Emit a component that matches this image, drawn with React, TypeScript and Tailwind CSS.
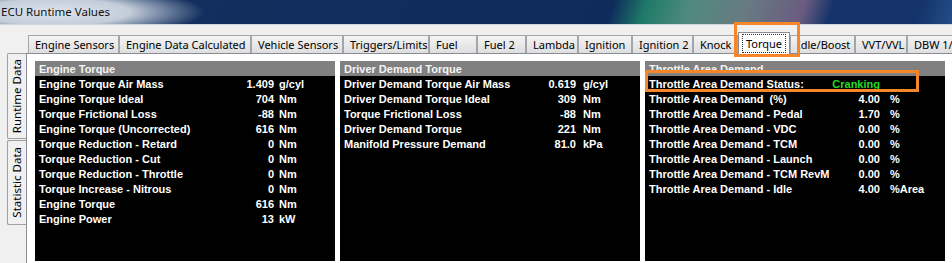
import React from "react";

type Tab = { label: string; cls: string; selected?: boolean };

const tabs: Tab[] = [
  { label: "Engine Sensors", cls: "w-[91px]" },
  { label: "Engine Data Calculated", cls: "w-[132px]" },
  { label: "Vehicle Sensors", cls: "w-[92px]" },
  { label: "Triggers/Limits", cls: "w-[86px]" },
  { label: "Fuel", cls: "w-[48px]" },
  { label: "Fuel 2", cls: "w-[49px]" },
  { label: "Lambda", cls: "w-[52px]" },
  { label: "Ignition", cls: "w-[54px]" },
  { label: "Ignition 2", cls: "w-[61px]" },
  { label: "Knock", cls: "w-[45px]" },
  { label: "Torque", cls: "w-[52px]", selected: true },
  { label: "Idle/Boost", cls: "w-[65px]" },
  { label: "VVT/VVL", cls: "w-[52px]" },
  { label: "DBW 1/2", cls: "w-[60px]" },
];

type Row = { label: string; value: string; unit: string; green?: boolean };

type Panel = {
  title: string;
  valCls: string;
  unitCls: string;
  rows: Row[];
};

const panels: Panel[] = [
  {
    title: "Engine Torque",
    valCls: "w-[235px]",
    unitCls: "ml-[5px]",
    rows: [
      { label: "Engine Torque Air Mass", value: "1.409", unit: "g/cyl" },
      { label: "Engine Torque Ideal", value: "704", unit: "Nm" },
      { label: "Torque Frictional Loss", value: "-88", unit: "Nm" },
      { label: "Engine Torque (Uncorrected)", value: "616", unit: "Nm" },
      { label: "Torque Reduction - Retard", value: "0", unit: "Nm" },
      { label: "Torque Reduction - Cut", value: "0", unit: "Nm" },
      { label: "Torque Reduction - Throttle", value: "0", unit: "Nm" },
      { label: "Torque Increase - Nitrous", value: "0", unit: "Nm" },
      { label: "Engine Torque", value: "616", unit: "Nm" },
      { label: "Engine Power", value: "13", unit: "kW" },
    ],
  },
  {
    title: "Driver Demand Torque",
    valCls: "w-[232px]",
    unitCls: "ml-[7px]",
    rows: [
      { label: "Driver Demand Torque Air Mass", value: "0.619", unit: "g/cyl" },
      { label: "Driver Demand Torque Ideal", value: "309", unit: "Nm" },
      { label: "Torque Frictional Loss", value: "-88", unit: "Nm" },
      { label: "Driver Demand Torque", value: "221", unit: "Nm" },
      { label: "Manifold Pressure Demand", value: "81.0", unit: "kPa" },
    ],
  },
  {
    title: "Throttle Area Demand",
    valCls: "w-[231px]",
    unitCls: "ml-[10px]",
    rows: [
      { label: "Throttle Area Demand Status:", value: "Cranking", unit: "", green: true },
      { label: "Throttle Area Demand  (%)", value: "4.00", unit: "%" },
      { label: "Throttle Area Demand - Pedal", value: "1.70", unit: "%" },
      { label: "Throttle Area Demand - VDC", value: "0.00", unit: "%" },
      { label: "Throttle Area Demand - TCM", value: "0.00", unit: "%" },
      { label: "Throttle Area Demand - Launch", value: "0.00", unit: "%" },
      { label: "Throttle Area Demand - TCM RevM", value: "0.00", unit: "%" },
      { label: "Throttle Area Demand - Idle", value: "4.00", unit: "%Area" },
    ],
  },
];

function DataPanel({ p }: { p: Panel }) {
  return (
    <div className="w-[300px] h-[200px] bg-black flex flex-col font-['Liberation_Sans',Arial,sans-serif] font-bold text-[11px] leading-none text-white">
      <div className="h-[15px] bg-[#808080] flex items-center pl-[4px] pt-[1px] text-[#f4f4f4]">{p.title}</div>
      {p.rows.map((r) => (
        <div key={r.label} className="h-[15px] flex items-center pl-[4px] pt-[1px]">
          <div className={`${p.valCls} flex justify-between whitespace-pre`}>
            <span>{r.label}</span>
            <span className={r.green ? "text-[#22dc22]" : ""}>{r.value}</span>
          </div>
          <span className={p.unitCls}>{r.unit}</span>
        </div>
      ))}
    </div>
  );
}

export default function App() {
  return (
    <div className="relative w-[952px] h-[263px] overflow-hidden bg-[#f0f0f0] font-['Noto_Sans',sans-serif]">
      {/* title bar */}
      <div className="h-[24px] flex items-center pl-[1px] bg-[image:radial-gradient(150px_26px_at_55px_12px,#dde3ec_0%,#c3cddb_50%,rgba(20,50,100,0)_100%),linear-gradient(108deg,#13305f_0%,#0f2b5b_64%,#1e7a68_67.5%,#4f8a7e_72%,#687a82_78%,#6a5c80_84%,#14336a_87%,#14336a_96%,#244c86_100%)]">
        <span className="text-[11.5px] text-[#111] leading-none">ECU Runtime Values</span>
      </div>
      <div className="h-[1px] bg-[#cdd5de]" />

      <div className="flex h-[238px]">
        {/* left vertical tabs */}
        <div className="w-[26px] flex flex-col pl-[7px]">
          <div className="mt-[28px] h-[86px] w-[19px] border-l border-t border-b border-[#a0a0a0] rounded-l-[2px] bg-[#f0f0f0] flex items-center justify-center">
            <span className="[writing-mode:vertical-rl] rotate-180 text-[11.5px] leading-none text-black whitespace-nowrap">Runtime Data</span>
          </div>
          <div className="mt-[1px] h-[85px] w-[19px] border-l border-t border-b border-[#a0a0a0] rounded-l-[2px] bg-[#f0f0f0] flex items-center justify-center">
            <span className="[writing-mode:vertical-rl] rotate-180 text-[11.5px] leading-none text-black whitespace-nowrap">Statistic Data</span>
          </div>
        </div>

        {/* right column */}
        <div className="flex-1 flex flex-col">
          <div className="h-[28px] flex items-end pl-[2px]">
            {tabs.map((t) =>
              t.selected ? (
                <div
                  key={t.label}
                  className={`${t.cls} h-[22px] -mb-[1px] relative z-10 shrink-0 bg-white border-l border-t border-r border-[#898c95] flex items-center justify-center px-[3px] pt-[1px] pb-[1px]`}
                >
                  <div className="w-full h-full border border-dotted border-[#333] flex items-center justify-center">
                    <span className="text-[11px] leading-none text-black whitespace-nowrap">{t.label}</span>
                  </div>
                </div>
              ) : (
                <div
                  key={t.label}
                  className={`${t.cls} h-[18px] shrink-0 bg-gradient-to-b from-[#f4f4f4] to-[#dedede] border-l border-t border-r border-[#a3a5aa] flex items-center pl-[6px] overflow-hidden`}
                >
                  <span className="text-[11px] leading-none text-black whitespace-nowrap">{t.label}</span>
                </div>
              )
            )}
          </div>
          <div className="flex-1 bg-white border-t border-l border-[#898c95] pl-[8px] pt-[7px] flex gap-[5px]">
            {panels.map((p) => (
              <DataPanel key={p.title} p={p} />
            ))}
          </div>
        </div>
      </div>

      {/* orange annotation boxes */}
      <div className="absolute left-[734px] top-[22px] w-[66px] h-[35px] border-[3px] border-[#f5862a] z-20" />
      <div className="absolute left-[645px] top-[70px] w-[274px] h-[22px] border-[3px] border-[#f5862a] z-20" />
    </div>
  );
}
